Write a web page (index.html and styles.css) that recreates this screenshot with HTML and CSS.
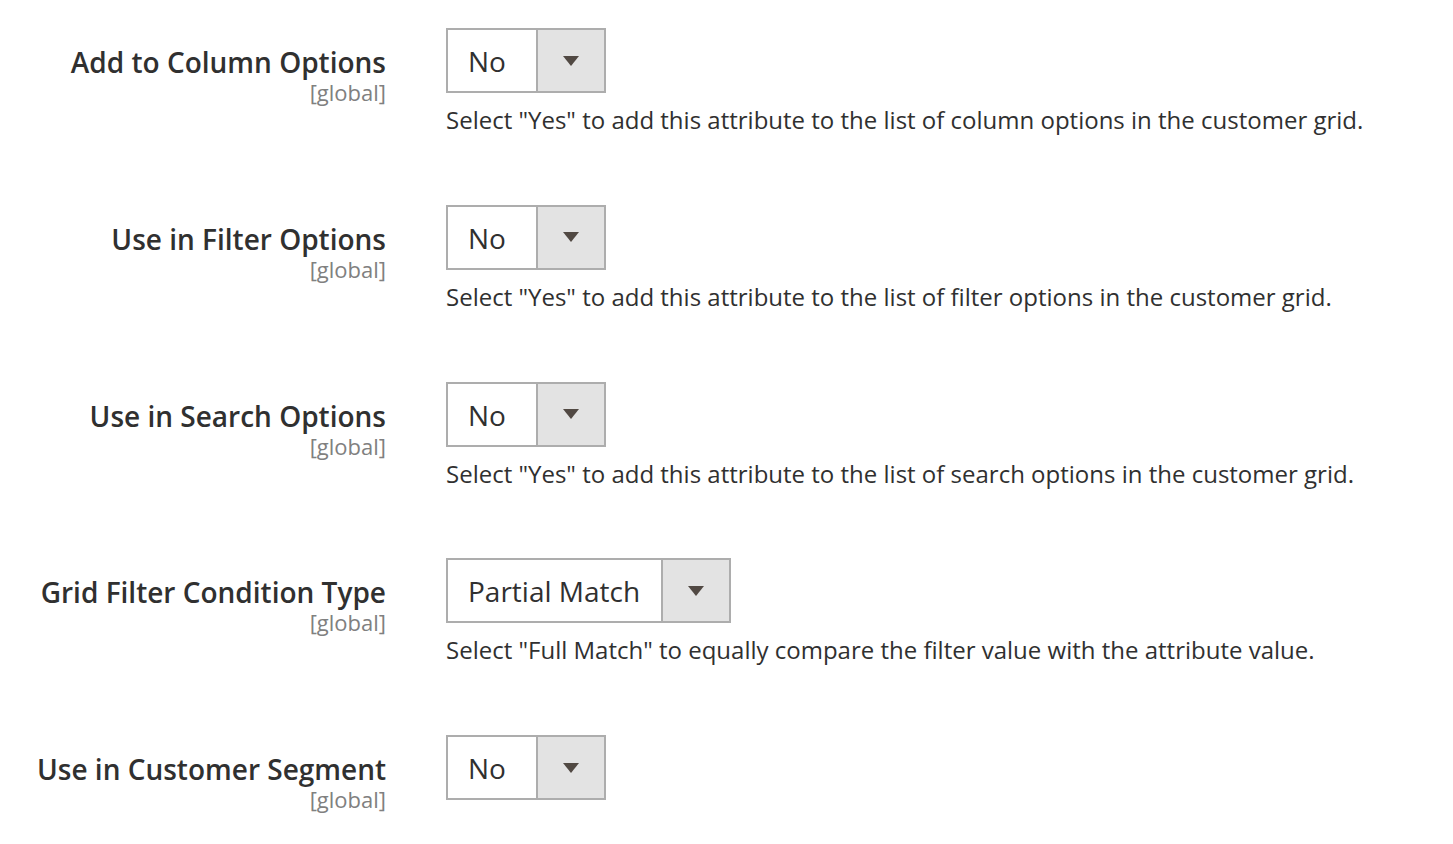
FILE: index.html
```html
<!DOCTYPE html>
<html>
<head>
<meta charset="utf-8">
<link rel="stylesheet" href="styles.css">
</head>
<body>
<div class="form">
  <div class="field">
    <div class="label"><span class="title">Add to Column Options</span><span class="scope">[global]</span></div>
    <div class="control">
      <div class="select"><span class="value">No</span><span class="arrow"><i></i></span></div>
      <div class="note">Select "Yes" to add this attribute to the list of column options in the customer grid.</div>
    </div>
  </div>
  <div class="field">
    <div class="label"><span class="title">Use in Filter Options</span><span class="scope">[global]</span></div>
    <div class="control">
      <div class="select"><span class="value">No</span><span class="arrow"><i></i></span></div>
      <div class="note">Select "Yes" to add this attribute to the list of filter options in the customer grid.</div>
    </div>
  </div>
  <div class="field">
    <div class="label"><span class="title">Use in Search Options</span><span class="scope">[global]</span></div>
    <div class="control">
      <div class="select"><span class="value">No</span><span class="arrow"><i></i></span></div>
      <div class="note">Select "Yes" to add this attribute to the list of search options in the customer grid.</div>
    </div>
  </div>
  <div class="field">
    <div class="label"><span class="title">Grid Filter Condition Type</span><span class="scope">[global]</span></div>
    <div class="control">
      <div class="select wide"><span class="value">Partial Match</span><span class="arrow"><i></i></span></div>
      <div class="note">Select "Full Match" to equally compare the filter value with the attribute value.</div>
    </div>
  </div>
  <div class="field">
    <div class="label"><span class="title">Use in Customer Segment</span><span class="scope">[global]</span></div>
    <div class="control">
      <div class="select"><span class="value">No</span><span class="arrow"><i></i></span></div>
    </div>
  </div>
</div>
</body>
</html>
```

FILE: styles.css
```css
html, body {
  margin: 0;
  padding: 0;
  background: #ffffff;
}
body {
  font-family: "Open Sans", "Noto Sans", sans-serif;
  color: #303030;
}
.form {
  padding-top: 28px;
}
.field {
  display: flex;
  height: 176.75px;
}
.label {
  width: 386px;
  display: flex;
  flex-direction: column;
  align-items: flex-end;
  padding-top: 16px;
  box-sizing: border-box;
}
.title {
  font-size: 28px;
  font-weight: 600;
  line-height: 36px;
  color: #303030;
}
.scope {
  font-size: 22px;
  line-height: 24px;
  color: #808080;
}
.control {
  margin-left: 60px;
  display: flex;
  flex-direction: column;
  align-items: flex-start;
}
.select {
  display: flex;
  width: 160px;
  height: 65px;
  border: 2px solid #adadad;
  box-sizing: border-box;
  background: #ffffff;
}
.select.wide {
  width: 285px;
}
.value {
  flex: 1;
  font-size: 28px;
  line-height: 61px;
  padding-top: 1px;
  padding-left: 20px;
  color: #303030;
}
.arrow {
  width: 66px;
  border-left: 2px solid #adadad;
  background: #e3e3e3;
  display: flex;
  align-items: center;
  justify-content: center;
}
.arrow i {
  display: block;
  width: 0;
  height: 0;
  border-left: 8px solid transparent;
  border-right: 8px solid transparent;
  border-top: 10px solid #514943;
}
.note {
  margin-top: 10px;
  font-size: 24px;
  line-height: 34px;
  color: #303030;
}
```
